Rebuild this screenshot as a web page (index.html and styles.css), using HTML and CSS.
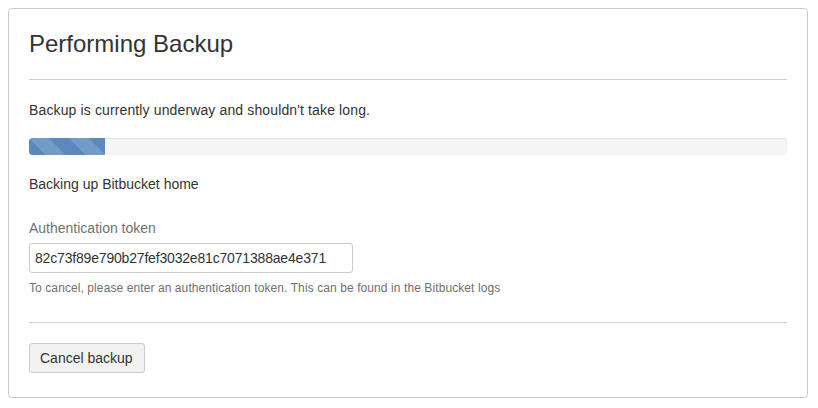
FILE: index.html
```html
<!DOCTYPE html>
<html>
<head>
<meta charset="utf-8">
<link rel="stylesheet" href="styles.css">
</head>
<body>
<div class="panel">
  <h2 class="title">Performing Backup</h2>
  <hr class="rule">
  <p class="lead">Backup is currently underway and shouldn't take long.</p>
  <div class="progress"><div class="progress-bar" style="width:10%"></div></div>
  <p class="status">Backing up Bitbucket home</p>
  <label class="field-label" for="token">Authentication token</label>
  <input class="field-input" id="token" type="text" value="82c73f89e790b27fef3032e81c7071388ae4e371">
  <p class="help">To cancel, please enter an authentication token. This can be found in the Bitbucket logs</p>
  <hr class="rule rule-bottom">
  <button class="btn" type="button">Cancel backup</button>
</div>
</body>
</html>
```

FILE: styles.css
```css
html, body {
  margin: 0;
  padding: 0;
  background: #fff;
}
body {
  padding: 8px;
  font-family: "Liberation Sans", Arial, sans-serif;
  font-size: 14px;
  line-height: 20px;
  color: #333;
}
.panel {
  box-sizing: border-box;
  width: 800px;
  border: 1px solid #ccc;
  border-radius: 4px;
  padding: 22px 20px 24px;
  display: flex;
  flex-direction: column;
  align-items: flex-start;
}
.title {
  margin: 0;
  font-size: 24px;
  font-weight: normal;
  line-height: 26px;
  color: #333;
}
.rule {
  align-self: stretch;
  border: 0;
  border-top: 1px solid #d0d0d0;
  margin: 22px 0 20px;
}
.lead {
  margin: 0;
  letter-spacing: 0.13px;
}
.progress {
  align-self: stretch;
  height: 17px;
  margin-top: 18px;
  background: #f5f5f5;
  border-radius: 3px;
  box-shadow: inset 0 1px 2px rgba(0,0,0,.08);
  overflow: hidden;
}
.progress-bar {
  height: 100%;
  background-color: #5a8abd;
  background-image: linear-gradient(45deg, rgba(255,255,255,.15) 25%, transparent 25%, transparent 50%, rgba(255,255,255,.15) 50%, rgba(255,255,255,.15) 75%, transparent 75%, transparent);
  background-size: 40px 40px;
  border-radius: 3px 0 0 3px;
}
.status {
  margin: 19px 0 0;
}
.field-label {
  margin-top: 24px;
  color: #707070;
}
.field-input {
  box-sizing: border-box;
  margin-top: 5px;
  width: 324px;
  height: 30px;
  padding: 0 5px;
  border: 1px solid #ccc;
  border-radius: 3px;
  font-family: "Liberation Sans", Arial, sans-serif;
  font-size: 14px;
  letter-spacing: -0.18px;
  color: #333;
  background: #fff;
}
.help {
  margin: 7px 0 0;
  font-size: 12px;
  line-height: 16px;
  letter-spacing: 0.09px;
  color: #707070;
}
.rule-bottom {
  margin: 26px 0 20px;
}
.btn {
  box-sizing: border-box;
  height: 30px;
  padding: 0 11px 0 10px;
  border: 1px solid #ccc;
  border-radius: 3px;
  background: #f2f2f2;
  font-family: "Liberation Sans", Arial, sans-serif;
  font-size: 14px;
  color: #333;
}
```
